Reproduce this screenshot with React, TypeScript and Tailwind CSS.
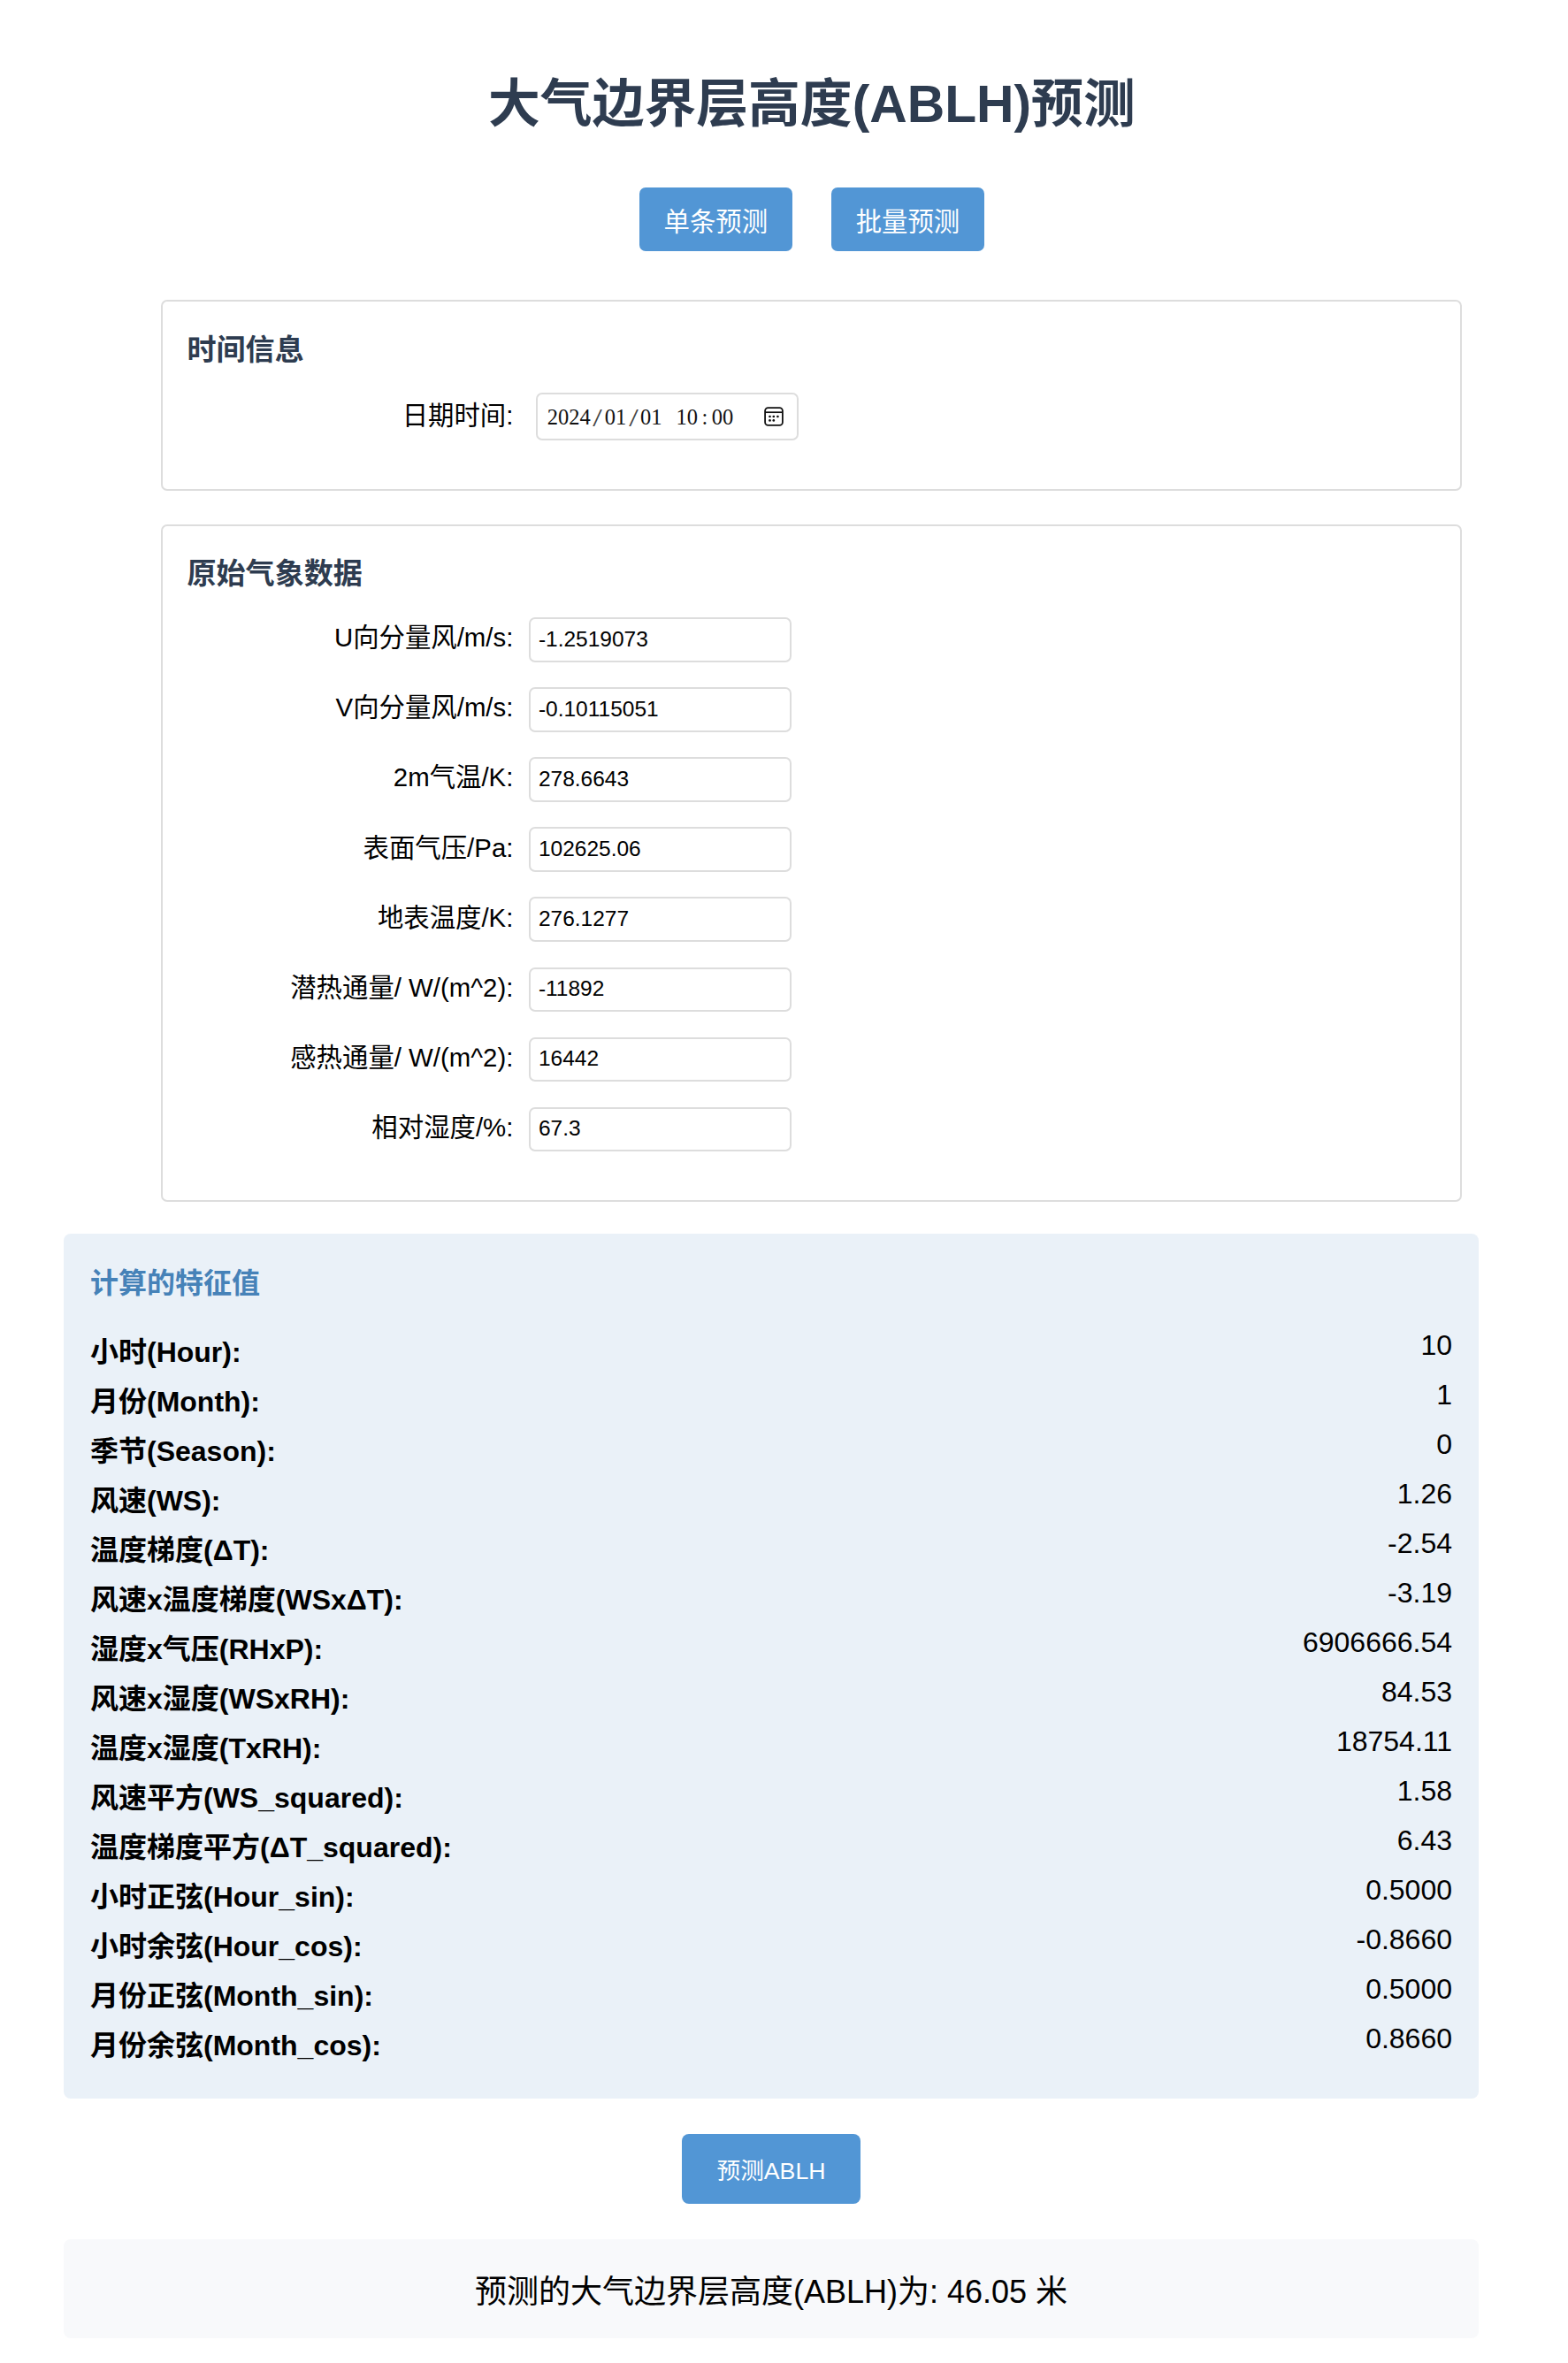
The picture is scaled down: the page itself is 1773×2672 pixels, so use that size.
const meteo: [string, string][] = [
  ["U向分量风/m/s:", "-1.2519073"],
  ["V向分量风/m/s:", "-0.10115051"],
  ["2m气温/K:", "278.6643"],
  ["表面气压/Pa:", "102625.06"],
  ["地表温度/K:", "276.1277"],
  ["潜热通量/ W/(m^2):", "-11892"],
  ["感热通量/ W/(m^2):", "16442"],
  ["相对湿度/%:", "67.3"],
];

const features: [string, string][] = [
  ["小时(Hour):", "10"],
  ["月份(Month):", "1"],
  ["季节(Season):", "0"],
  ["风速(WS):", "1.26"],
  ["温度梯度(ΔT):", "-2.54"],
  ["风速x温度梯度(WSxΔT):", "-3.19"],
  ["湿度x气压(RHxP):", "6906666.54"],
  ["风速x湿度(WSxRH):", "84.53"],
  ["温度x湿度(TxRH):", "18754.11"],
  ["风速平方(WS_squared):", "1.58"],
  ["温度梯度平方(ΔT_squared):", "6.43"],
  ["小时正弦(Hour_sin):", "0.5000"],
  ["小时余弦(Hour_cos):", "-0.8660"],
  ["月份正弦(Month_sin):", "0.5000"],
  ["月份余弦(Month_cos):", "0.8660"],
];

function CalendarIcon() {
  return (
    <svg width="22" height="22" viewBox="0 0 22 22" fill="none" stroke="#111" strokeWidth="1.8">
      <rect x="1.1" y="1.1" width="19.8" height="19.8" rx="3.4" />
      <path d="M1.1 6.2h19.8" strokeWidth="1.7" />
      <g fill="#111" stroke="none">
        <circle cx="6.5" cy="11" r="1.35" />
        <circle cx="10.8" cy="11" r="1.35" />
        <circle cx="15.4" cy="11" r="1.35" />
        <circle cx="6.5" cy="15.4" r="1.35" />
        <circle cx="10.8" cy="15.4" r="1.35" />
      </g>
    </svg>
  );
}

function DatePart({ children }: { children: string }) {
  return <span className="px-[1.84px]">{children}</span>;
}

function DateSep({ children }: { children: string }) {
  return <span className="w-[12.25px] text-center">{children}</span>;
}

function Slash() {
  return (
    <span className="flex w-[12.25px] justify-center">
      <span className="inline-block scale-x-[1.55] scale-y-[1.2] text-[#444]">/</span>
    </span>
  );
}

function TabButton({ children }: { children: string }) {
  return (
    <button className="h-[72px] w-[173px] rounded-[7px] bg-[#5296d5] pt-[5px] text-[29.4px] leading-[40px] text-white">
      {children}
    </button>
  );
}

export default function App() {
  return (
    <div
      lang="zh-CN"
      className="h-[2672px] w-[1773px] overflow-hidden bg-white text-black [font-family:'Liberation_Sans','Noto_Sans_CJK_SC',sans-serif]"
    >
      <div className="ml-[182.4px] w-[1471px] pt-[87.6px]">
        <h1 className="text-center text-[58.8px] leading-[60px] font-bold text-[#2e3c50]">
          大气边界层高度(ABLH)预测
        </h1>
        <div className="mt-[64.9px] flex justify-center gap-[44.2px]">
          <TabButton>单条预测</TabButton>
          <TabButton>批量预测</TabButton>
        </div>

        <section className="mt-[55px] h-[216px] rounded-[7px] border-2 border-[#ddd] px-[27px] pt-[34.5px]">
          <h3 className="text-[33.1px] leading-[40px] font-bold text-[#2e3c50]">时间信息</h3>
          <div className="mt-[28.5px] flex h-[54px] items-center">
            <label className="w-[369px] pb-[3px] text-right text-[29.4px] leading-[40px]">日期时间:</label>
            <div className="ml-[26px] flex h-[54px] w-[297px] items-center justify-between rounded-[7px] border-2 border-[#ddd] pr-[15px] pl-[8.5px]">
              <div className="flex pt-[2px] text-[24.5px] leading-[30px] text-[#111] [font-family:'Liberation_Serif',serif]">
                <DatePart>2024</DatePart>
                <Slash />
                <DatePart>01</DatePart>
                <Slash />
                <DatePart>01</DatePart>
                <DateSep> </DateSep>
                <DatePart>10</DatePart>
                <DateSep>:</DateSep>
                <DatePart>00</DatePart>
              </div>
              <CalendarIcon />
            </div>
          </div>
        </section>

        <section className="mt-[37.4px] h-[766.6px] rounded-[7px] border-2 border-[#ddd] px-[27px] pt-[34px]">
          <h3 className="text-[33.1px] leading-[40px] font-bold text-[#2e3c50]">原始气象数据</h3>
          <div className="mt-[29.3px] flex flex-col gap-[28.4px]">
            {meteo.map(([label, value]) => (
              <div key={label} className="flex h-[50.7px] items-center">
                <label className="w-[369px] pb-[4.5px] text-right text-[29.4px] leading-[40px] whitespace-nowrap">
                  {label}
                </label>
                <input
                  defaultValue={value}
                  className="ml-[18px] h-[50.7px] w-[297px] rounded-[7px] border-2 border-[#ddd] bg-white pb-[2px] pl-[8.5px] text-[24.5px]"
                />
              </div>
            ))}
          </div>
        </section>
      </div>

      <div className="ml-[72px] w-[1600px]">
        <section className="mt-[35.7px] h-[978px] rounded-[8px] bg-[#eaf1f8] px-[30px] pt-[36px]">
          <h3 className="text-[32px] leading-[40px] font-bold text-[#4682b8]">计算的特征值</h3>
          <div className="mt-[30px]">
            {features.map(([label, value]) => (
              <div key={label} className="flex h-[56px] justify-between text-[32px]">
                <span className="leading-[56px] font-bold">{label}</span>
                <span className="leading-[40px]">{value}</span>
              </div>
            ))}
          </div>
        </section>
        <div className="mt-[40px] flex justify-center">
          <button className="h-[79px] w-[202px] rounded-[8px] bg-[#5296d5] pt-[4px] text-[26.67px] leading-[40px] text-white">
            预测ABLH
          </button>
        </div>
        <div className="mt-[40px] flex h-[112px] items-center justify-center rounded-[8px] bg-[#f8f9fb] pt-[8px] text-[36px] leading-[50px]">
          预测的大气边界层高度(ABLH)为: 46.05 米
        </div>
      </div>
    </div>
  );
}
